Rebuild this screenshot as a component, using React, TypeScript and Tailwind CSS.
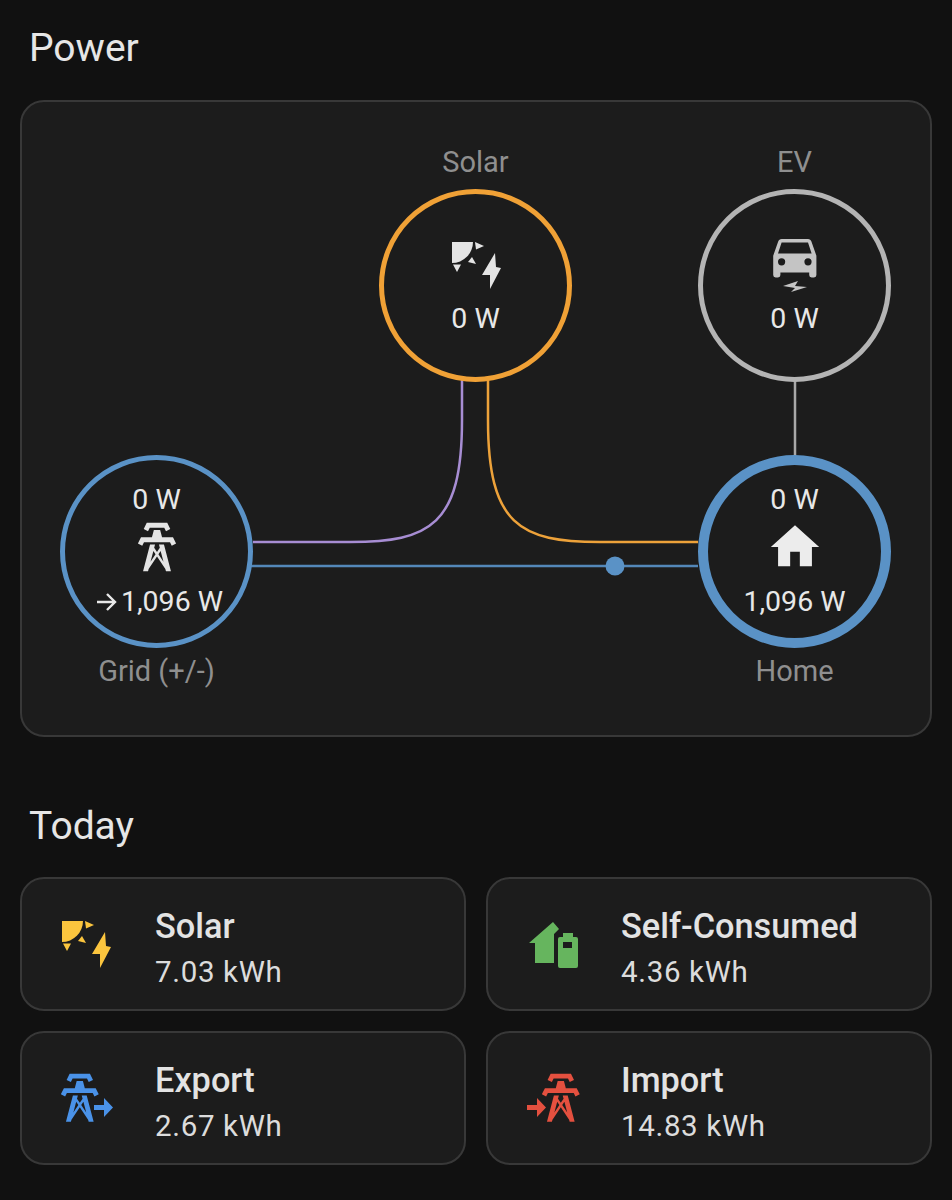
const TOWER =
  "M8.28,5.45L6.5,4.55L7.76,2H16.23L17.5,4.55L15.72,5.44L15,4H9L8.28,5.45M18.62,8H14.09L13.3,5H10.7L9.91,8H5.38L4.1,10.55L5.89,11.44L6.62,10H17.38L18.1,11.44L19.89,10.55L18.62,8M17.77,22H15.7L15.46,21.1L12,15.9L8.53,21.1L8.3,22H6.23L9.12,11H11.19L10.83,12.35L12,14.1L13.16,12.35L12.81,11H14.88L17.77,22M11.4,15L10.5,13.65L9.32,18.13L11.4,15M14.68,18.12L13.5,13.64L12.6,14.99L14.68,18.12Z";
const HOME = "M10,20V14H14V20H19V12H22L12,3L2,12H5V20H10Z";
const CAR =
  "M5,11L6.5,6.5H17.5L19,11H5M17.5,16A1.5,1.5 0 0,1 16,14.5A1.5,1.5 0 0,1 17.5,13A1.5,1.5 0 0,1 19,14.5A1.5,1.5 0 0,1 17.5,16M6.5,16A1.5,1.5 0 0,1 5,14.5A1.5,1.5 0 0,1 6.5,13A1.5,1.5 0 0,1 8,14.5A1.5,1.5 0 0,1 6.5,16M18.92,6C18.72,5.42 18.16,5 17.5,5H6.5C5.84,5 5.28,5.42 5.08,6L3,12V20A1,1 0 0,0 4,21H5A1,1 0 0,0 6,20V19H18V20A1,1 0 0,0 19,21H20A1,1 0 0,0 21,20V12L18.92,6Z";

function SolarIcon({ className }: { className: string }) {
  return (
    <svg viewBox="0 0 50 50" className={className} fill="currentColor">
      <path d="M1 2H22A21 21 0 0 1 1 23Z" />
      <path d="M24 2L33 6L25 9.5Z" />
      <path d="M21 17L25 24L17 22Z" />
      <path d="M2 24.500H10L6 32Z" />
      <path d="M44 13L45 27L50 28L39 49L39 35L31 35Z" />
    </svg>
  );
}

function Tower({ className }: { className: string }) {
  return (
    <svg viewBox="0 0 24 24" className={className} fill="currentColor">
      <path d={TOWER} />
    </svg>
  );
}

function ExportIcon({ className }: { className: string }) {
  return (
    <svg viewBox="0 0 58 58" className={className} fill="currentColor">
      <path transform="translate(-7 0) scale(2.4)" d={TOWER} />
      <path d="M36 36H46V29L55 38.5L46 48V41H36Z" />
    </svg>
  );
}

function ImportIcon({ className }: { className: string }) {
  return (
    <svg viewBox="0 0 58 58" className={className} fill="currentColor">
      <path transform="translate(8 0) scale(2.4)" d={TOWER} />
      <path d="M3 36H13V29L22 38.5L13 48V41H3Z" />
    </svg>
  );
}

function HomeBatteryIcon({ className }: { className: string }) {
  return (
    <svg viewBox="0 0 58 58" className={className} fill="currentColor">
      <path d="M5 28L29 7L35 14L30 19V48H11V28Z" />
      <path
        fillRule="evenodd"
        d="M39 18H49V22H52A2 2 0 0 1 54 24V51A2 2 0 0 1 52 53H36A2 2 0 0 1 34 51V24A2 2 0 0 1 36 22H39ZM39 27V33H48V27Z"
      />
    </svg>
  );
}

function CarIcon({ className }: { className: string }) {
  return (
    <svg viewBox="0 0 58 66" className={className} fill="currentColor">
      <path transform="scale(2.4)" fillRule="evenodd" d={CAR} />
      <path d="M17 59L32 54L29 59L41 60L25 65L29 61Z" />
    </svg>
  );
}

function Flows() {
  return (
    <svg
      viewBox="22 102 908 633"
      className="absolute left-0 top-0 h-[633px] w-[908px]"
      fill="none"
      strokeWidth="2.500"
    >
      <path d="M462 378V420C462 525 430 542 350 542H253" stroke="#a78dd3" />
      <path d="M488 378V420C488 525 520 542 600 542H698" stroke="#eda23a" />
      <path d="M247 566H698" stroke="#5387b8" />
      <circle cx="615" cy="566" r="9.5" fill="#5a92c6" stroke="none" />
      <path d="M795 379V456" stroke="#a8a8a8" />
    </svg>
  );
}

function Label({ children }: { children: string }) {
  return <div className="text-center text-[29px] leading-8 text-[#8f8f8f]">{children}</div>;
}

function Tile({ icon, title, value }: { icon: React.ReactNode; title: string; value: string }) {
  return (
    <div className="flex h-[134px] items-center rounded-[24px] border-2 border-[#383838] bg-[#1c1c1c] pl-[36px]">
      {icon}
      <div className="ml-[39px] pt-[9px]">
        <div className="text-[34.3px] font-medium leading-[40px] text-[#e3e3e3]">{title}</div>
        <div className="mt-[6px] text-[29.5px] leading-[40px] tracking-[0.65px] text-[#dcdcdc]">{value}</div>
      </div>
    </div>
  );
}

export default function App() {
  return (
    <div className="h-[1200px] w-[952px] overflow-hidden bg-[#111111] px-5 pt-6 font-['Roboto',sans-serif]">
      <h2 className="pl-[9px] pt-px text-[39px] font-normal leading-[47px] text-[#e6e6e6]">Power</h2>

      <div className="relative mt-7 h-[637px] rounded-[24px] border-2 border-[#383838] bg-[#1c1c1c] pl-[38px] pt-[44px]">
        <Flows />
        <div className="relative grid grid-cols-[193px_193px_193px] gap-x-[126px] text-[28.5px] leading-8 text-[#e8e8e8]">
          <div className="col-start-2">
            <Label>Solar</Label>
            <div className="mt-[10.5px] flex h-[193px] w-[193px] flex-col items-center rounded-full border-[5px] border-[#f0a136] pt-[46px]">
              <SolarIcon className="h-[50px] w-[50px] text-[#e4e4e4]" />
              <div className="mt-[13px]">0 W</div>
            </div>
          </div>
          <div className="col-start-3">
            <Label>EV</Label>
            <div className="mt-[10.5px] flex h-[193px] w-[193px] flex-col items-center rounded-full border-[5px] border-[#b4b4b4] pt-[33px]">
              <CarIcon className="h-[66px] w-[58px] text-[#c4c4c4]" />
              <div className="mt-[10px]">0 W</div>
            </div>
          </div>

          <div className="col-start-1 row-start-2 mt-[73px]">
            <div className="flex h-[193px] w-[193px] flex-col items-center rounded-full border-[5px] border-[#5a92c6] pt-6">
              <div>0 W</div>
              <Tower className="mt-[2px] h-[58px] w-[58px] text-[#e4e4e4]" />
              <div className="ml-1 mt-[10px] flex items-center whitespace-nowrap">
                <svg viewBox="0 0 20 20" className="ml-[3px] mr-[4px] h-5 w-5" fill="none" stroke="currentColor" strokeWidth="2.400">
                  <path d="M0 10H18M10 2L18 10L10 18" />
                </svg>
                1,096 W
              </div>
            </div>
            <div className="mt-[7.5px]">
              <Label>Grid (+/-)</Label>
            </div>
          </div>
          <div className="col-start-3 row-start-2 mt-[73px]">
            <div className="flex h-[193px] w-[193px] flex-col items-center rounded-full border-[10px] border-[#5a92c6] pt-[19px]">
              <div>0 W</div>
              <svg viewBox="0 0 24 24" className="mt-[2px] h-[58px] w-[58px] text-[#ececec]" fill="currentColor">
                <path d={HOME} />
              </svg>
              <div className="mt-[10px] whitespace-nowrap">1,096 W</div>
            </div>
            <div className="mt-[7.5px]">
              <Label>Home</Label>
            </div>
          </div>
        </div>
      </div>

      <h2 className="mt-[65px] pl-[9px] pt-px text-[39px] font-normal leading-[47px] text-[#e6e6e6]">Today</h2>

      <div className="mt-[27px] grid grid-cols-2 gap-5">
        <Tile icon={<SolarIcon className="ml-[3px] mr-[5px] h-[50px] w-[50px] text-[#fbc53e]" />} title="Solar" value="7.03 kWh" />
        <Tile icon={<HomeBatteryIcon className="h-[58px] w-[58px] text-[#66b55e]" />} title="Self-Consumed" value="4.36 kWh" />
        <Tile icon={<ExportIcon className="h-[58px] w-[58px] text-[#4a92e8]" />} title="Export" value="2.67 kWh" />
        <Tile icon={<ImportIcon className="h-[58px] w-[58px] text-[#e4503f]" />} title="Import" value="14.83 kWh" />
      </div>
    </div>
  );
}
